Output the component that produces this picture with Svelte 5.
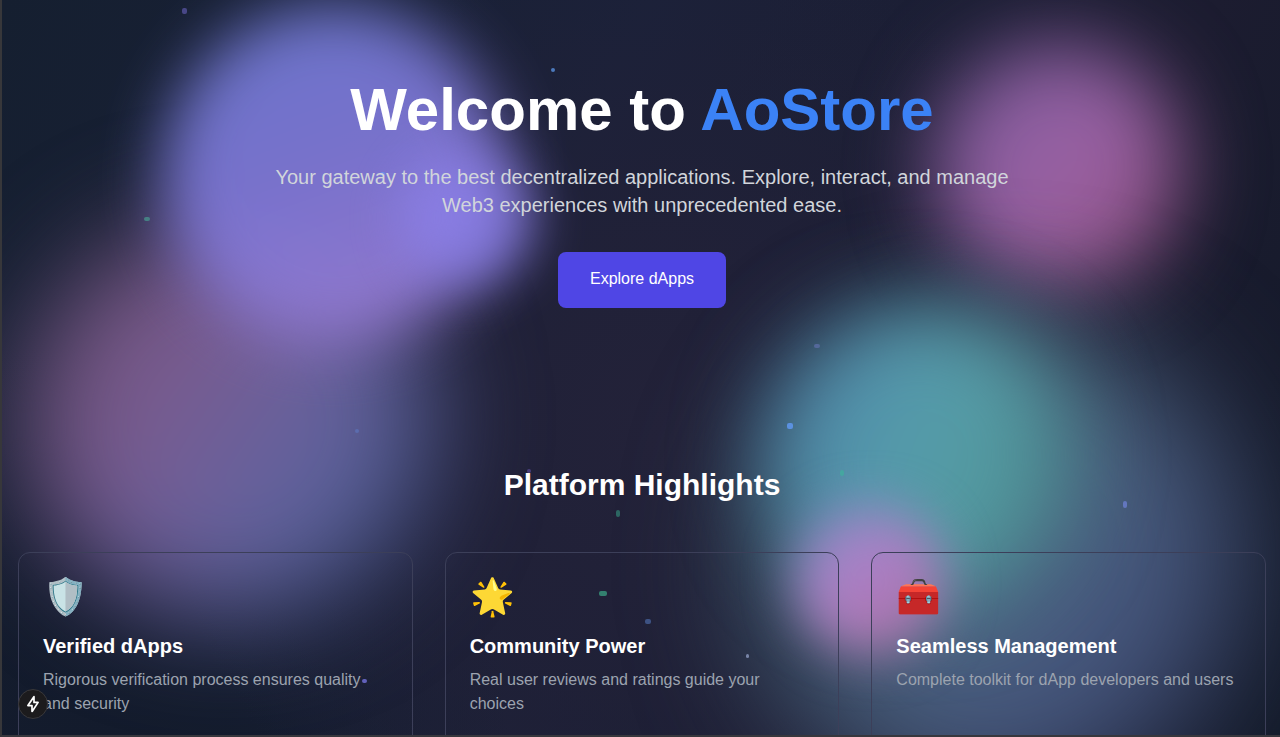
<script>
  const particles = [
    { x: 182, y: 8, w: 5, h: 6, c: '#484787' },
    { x: 551, y: 68, w: 4, h: 4, c: '#4c79bc' },
    { x: 380, y: 172, w: 5, h: 4, c: '#6b8ee8' },
    { x: 144, y: 217, w: 6, h: 4, c: '#467f83' },
    { x: 814, y: 344, w: 6, h: 4, c: '#54689a' },
    { x: 787, y: 423, w: 6, h: 6, c: '#5b91e0' },
    { x: 355, y: 429, w: 4, h: 4, c: '#5c6cae' },
    { x: 527, y: 469, w: 4, h: 4, c: '#493f7c' },
    { x: 840, y: 470, w: 4, h: 6, c: '#45a6a0' },
    { x: 616, y: 510, w: 4, h: 7, c: '#2c6662' },
    { x: 1123, y: 501, w: 4, h: 7, c: '#6376bd' },
    { x: 599, y: 591, w: 8, h: 5, c: '#33806f' },
    { x: 645, y: 619, w: 6, h: 5, c: '#3d5283' },
    { x: 746, y: 654, w: 3, h: 4, c: '#7884a7' },
    { x: 362, y: 679, w: 5, h: 4, c: '#6261bb' }
  ];
  const cards = [
    { icon: '🛡️', title: 'Verified dApps', text: 'Rigorous verification process ensures quality and security' },
    { icon: '🌟', title: 'Community Power', text: 'Real user reviews and ratings guide your choices' },
    { icon: '🧰', title: 'Seamless Management', text: 'Complete toolkit for dApp developers and users' }
  ];
</script>

<div class="page">
  <div class="backdrop" aria-hidden="true">
    <div class="blob rose"></div>
    <div class="blob indigo"></div>
    <div class="blob violet"></div>
    <div class="blob pink"></div>
    <div class="blob ocean"></div>
    <div class="blob teal"></div>
    <div class="blob orchid"></div>
    {#each particles as p}
      <i style="left:{p.x}px;top:{p.y}px;width:{p.w}px;height:{p.h}px;background:{p.c}"></i>
    {/each}
  </div>

  <main>
    <section class="hero">
      <h1>Welcome to <span>AoStore</span></h1>
      <p>Your gateway to the best decentralized applications. Explore, interact, and manage Web3 experiences with unprecedented ease.</p>
      <button>Explore dApps</button>
    </section>
    <section class="highlights">
      <h2>Platform Highlights</h2>
      <div class="grid">
        {#each cards as card}
          <article>
            <div class="icon">{card.icon}</div>
            <h3>{card.title}</h3>
            <p>{card.text}</p>
          </article>
        {/each}
      </div>
    </section>
  </main>

  <div class="badge">
    <svg width="16" height="20" viewBox="0 0 16 20" fill="none" stroke="#fff" stroke-width="1.700" stroke-linejoin="round">
      <path d="M8.900 2.700L2.900 11.600H7V17.300H7.300L13.100 8.400H9V2.700Z" />
    </svg>
  </div>
</div>

<style>
  :global(body) { margin: 0; overflow: hidden; background: #111827; }
  .page {
    position: relative;
    box-sizing: border-box;
    width: 1280px;
    height: 737px;
    overflow: hidden;
    border-left: 2px solid #37373a;
    border-bottom: 2px solid #37373d;
    font-family: "Liberation Sans", Arial, sans-serif;
    color: #fff;
    background:
      radial-gradient(circle at 660px 440px, #232239 0, rgba(33, 33, 56, 0.9) 180px, rgba(30, 32, 54, 0) 500px),
      radial-gradient(circle at 90px 760px, #131b2c 0, rgba(19, 27, 44, 0.9) 140px, rgba(19, 27, 44, 0) 420px),
      linear-gradient(115deg, #151f30 0%, #1b2139 40%, #1c1c30 75%, #131a29 100%);
  }
  .backdrop { position: absolute; inset: 0 0 0 -2px; overflow: hidden; }
  .blob { position: absolute; border-radius: 50%; }
  .indigo {
    left: 163px; top: 5px; width: 340px; height: 340px;
    background: linear-gradient(160deg, #6f77cf 12%, #7a74d0 45%, #8577d2 62%, #9279ce 85%);
    filter: blur(31px);
    opacity: 0.97;
  }
  .violet {
    left: 400px; top: 152px; width: 132px; height: 132px;
    background: #8b80ea;
    filter: blur(26px);
    opacity: 0.8;
  }
  .rose {
    left: 24px; top: 222px; width: 408px; height: 396px;
    background: linear-gradient(125deg, #70527a 12%, #7a5b8e 36%, #6c609b 54%, #5c629c 72%, #4b5a90 92%);
    filter: blur(53px);
  }
  .pink {
    left: 933px; top: 42px; width: 248px; height: 250px;
    background: linear-gradient(135deg, #7e5b9a 12%, #9861a4 50%, #98568a 85%);
    filter: blur(40px);
  }
  .teal {
    left: 764px; top: 308px; width: 308px; height: 298px;
    background: linear-gradient(110deg, #4b7ca6 5%, #559bac 42%, #559ca4 62%, #468484 100%);
    filter: blur(43px);
  }
  .ocean {
    left: 756px; top: 322px; width: 484px; height: 484px;
    background: linear-gradient(130deg, #3c5b66 5%, #48627a 40%, #485a80 65%, #333a60 100%);
    filter: blur(62px);
  }
  .orchid {
    left: 796px; top: 507px; width: 148px; height: 148px;
    background: linear-gradient(150deg, #948bcc 10%, #ad7dc2 50%, #a96fa0 90%);
    filter: blur(25px);
  }
  .backdrop i { position: absolute; border-radius: 2px; }
  main { position: relative; width: 1280px; }
  .hero { padding: 80px 16px; text-align: center; }
  h1 { margin: 0 0 23px; font-size: 60px; line-height: 60px; font-weight: 700; }
  h1 span { color: #3b82f6; }
  .hero p { width: 768px; margin: 0 auto 33px; font-size: 20px; line-height: 28px; color: #d1d5db; }
  button {
    display: block;
    margin: 0 auto;
    padding: 15px 32px 17px;
    border: 0;
    border-radius: 8px;
    background: #4f46e5;
    color: #fff;
    font: 16px/24px "Liberation Sans", Arial, sans-serif;
  }
  .highlights { padding: 79px 16px; }
  h2 { margin: 0 0 49px; font-size: 30px; line-height: 36px; text-align: center; }
  .grid { display: grid; grid-template-columns: repeat(3, 1fr); gap: 32px; }
  article { height: 160px; padding: 24px; border: 1px solid #3c3f59; border-radius: 12px; }
  .icon { height: 40px; margin-bottom: 15px; font-size: 36px; line-height: 40px; }
  h3 { margin: 0 0 8px; font-size: 20px; line-height: 28px; }
  article p { margin: 0; font-size: 16px; line-height: 24px; color: #9ca3af; }
  .badge {
    position: absolute;
    left: 16px;
    top: 689px;
    display: grid;
    place-items: center;
    box-sizing: border-box;
    width: 30px;
    height: 30px;
    border: 1px solid #39383b;
    border-radius: 50%;
    background: #1c1b1d;
  }
</style>
